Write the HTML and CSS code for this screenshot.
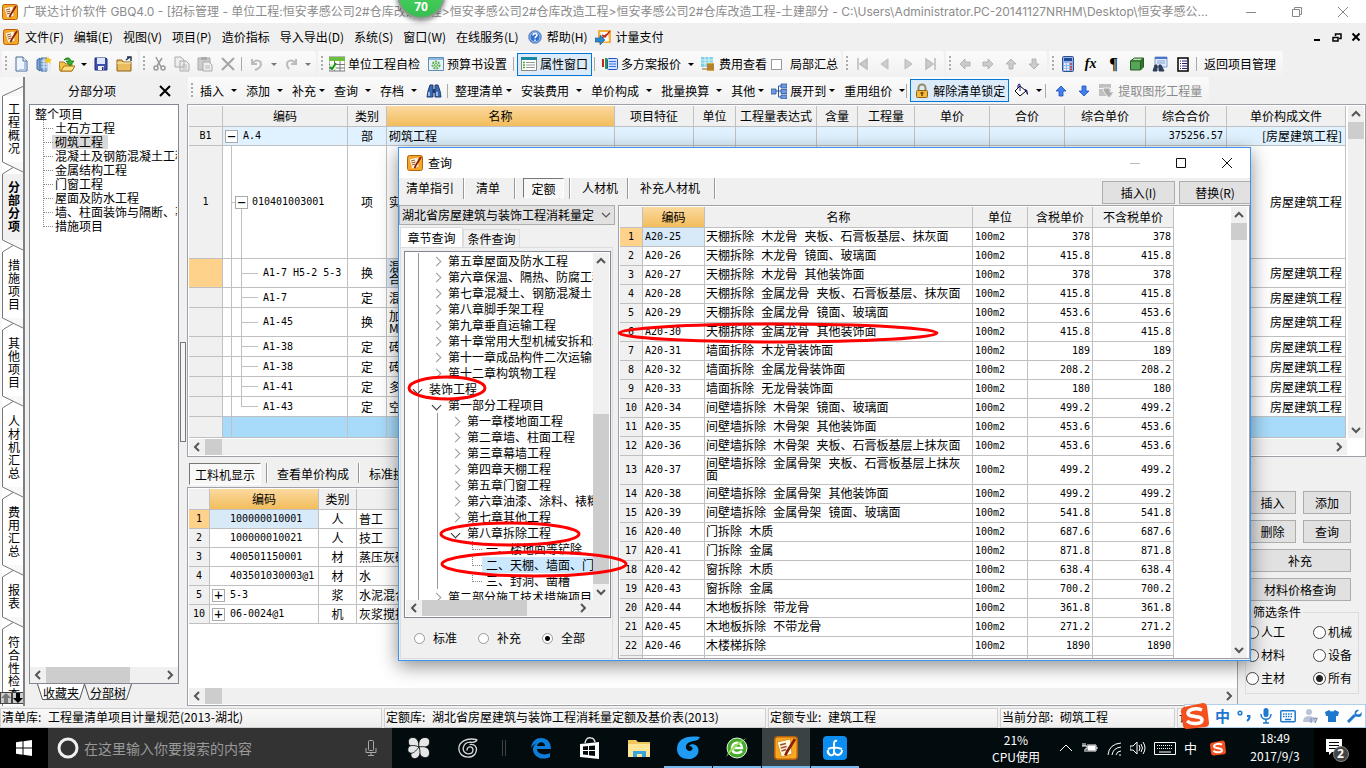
FILE: index.html
```html
<!DOCTYPE html>
<html lang="zh-CN">
<head>
<meta charset="utf-8">
<title>广联达计价软件 GBQ4.0</title>
<link rel="stylesheet" href="styles.css">
</head>
<body>
<svg class="defs" aria-hidden="true">
  <symbol id="app" viewBox="0 0 16 16"><rect x=".5" y=".5" width="15" height="15" rx="2" fill="#f7a823" stroke="#b8600b"/><path d="M2 4l9-2 1 10-7 2z" fill="#fff8e0" stroke="#d98a1a" stroke-width=".6"/><path d="M4 6l4-1M4.500 8l4-1M5 10l3-1" stroke="#a0522d" stroke-width="1"/><path d="M14 2l-5 8-1.500 3" stroke="#8a1f0a" stroke-width="1.800" fill="none"/></symbol>
  <symbol id="up" viewBox="0 0 16 16"><path d="M4 10l4-4 4 4" fill="none" stroke="#555" stroke-width="2"/></symbol>
  <symbol id="down" viewBox="0 0 16 16"><path d="M4 6l4 4 4-4" fill="none" stroke="#555" stroke-width="2"/></symbol>
  <symbol id="left" viewBox="0 0 16 16"><path d="M10 4L6 8l4 4" fill="none" stroke="#555" stroke-width="2"/></symbol>
  <symbol id="right" viewBox="0 0 16 16"><path d="M6 4l4 4-4 4" fill="none" stroke="#555" stroke-width="2"/></symbol>
  <symbol id="arr" viewBox="0 0 16 16"><path d="M8 3l5 5h-3v5H6V8H3z" stroke-width=".8"/></symbol>
  <symbol id="sogou" viewBox="0 0 28 28"><path d="M3 5L22 1q3 0 4 3l2 17q0 3-3 4L6 27q-3 0-4-3L0 9q0-3 3-4z" fill="#f4511e"/><path d="M21 8C14 5 7 8 7 11c0 5 14 2 14 7 0 4-10 5-15 1" fill="none" stroke="#fff" stroke-width="3.500"/></symbol>
  <symbol id="cap" viewBox="0 0 22 12"><path d="M0 0L22 11V12H0z" fill="#fff"/><path d="M.5 0L22 10.500M.5 12L11 5.500" stroke="#777" fill="none"/></symbol>
</svg>

<header class="titlebar">
  <svg class="i16"><use href="#app"/></svg>
  <h1>广联达计价软件 GBQ4.0 - [招标管理 - 单位工程:恒安孝感公司2#仓库改造工程&gt;恒安孝感公司2#仓库改造工程&gt;恒安孝感公司2#仓库改造工程-土建部分 - C:\Users\Administrator.PC-20141127NRHM\Desktop\恒安孝感公...</h1>
  <div class="winbtns">
    <button aria-label="最小化"><svg class="i12"><path d="M1 6.500h10"/></svg></button>
    <button aria-label="还原"><svg class="i12"><path d="M1.500 3.500h7v7h-7zM3.500 3V1.500h7v7H9"/></svg></button>
    <button aria-label="关闭"><svg class="i12"><path d="M1 1l10 10M11 1L1 11"/></svg></button>
  </div>
</header>
<div class="badge">70</div>

<nav class="menubar">
  <svg class="i16"><use href="#app"/></svg>
  <button>文件(F)</button><button>编辑(E)</button><button>视图(V)</button><button>项目(P)</button><button>造价指标</button><button>导入导出(D)</button><button>系统(S)</button><button>窗口(W)</button><button>在线服务(L)</button>
  <button class="icon-menu"><svg class="i16" viewBox="0 0 16 16"><circle cx="8" cy="8" r="6.500" fill="#2f6fd0" stroke="#9ab"/><circle cx="8" cy="8" r="5" fill="none" stroke="#dceaff" stroke-width=".7"/><path d="M6 6.500c0-3 4-2.500 4-.3C10 7.500 8 7.500 8 9.300M8 10.500v1.500" stroke="#fff" stroke-width="1.500" fill="none"/></svg>帮助(H)</button>
  <button class="icon-menu"><svg class="i16" viewBox="0 0 16 16"><rect x="3" y="1" width="13" height="13" fill="#f9b13d"/><path d="M5 3h8l1 9-7 1z" fill="#fff"/><path d="M15 2l-5 6-3-2M7 9l5-4" stroke="#c0301c" stroke-width="1.600" fill="none"/><path d="M0 9h5V6l5 5-5 5v-3H0z" fill="#2a88c8" stroke="#1a5c90" stroke-width=".6"/></svg>计量支付</button>
  <div class="mdi">
    <button aria-label="最小化"><svg class="i10"><path d="M1 8h6"/></svg></button>
    <button aria-label="还原"><svg class="i10"><path d="M1 5.500h5v3.500H1zM3.500 4V2H9v4.500H7" stroke-width="1.500"/></svg></button>
    <button aria-label="关闭"><svg class="i10"><path d="M1.500 1.500l7 7M8.500 1.500l-7 7"/></svg></button>
  </div>
</nav>

<div class="toolbar">
  <div class="group">
    <i class="grip"></i>
    <button class="ib" aria-label="新建"><svg class="i16" viewBox="0 0 16 16"><path d="M3 1h7l4 4v10H3z" fill="#eef5ff" stroke="#4a6a90"/><path d="M10 1v4h4" fill="#fff" stroke="#4a6a90"/><path d="M12 6v8H6" fill="none" stroke="#a8c4e8" stroke-width="2"/></svg></button>
    <button class="ib" aria-label="新建项目"><svg class="i16" viewBox="0 0 16 16"><path d="M1 4l3-2v13l-3-2zM5 2h6v13H5z" fill="#7fa7d8" stroke="#3f689f"/><path d="M5 5h9v10M5 8h9M5 11h9M8 2v13M11 2v13" stroke="#dce9fa"/><path d="M12 0l1 3 3 0-2 2 1 3-3-2-3 2 1-3-2-2h3z" fill="#f5c518"/></svg></button>
    <button class="ib" aria-label="打开"><svg class="i16" viewBox="0 0 16 16"><path d="M0 6h5l2 2h6v7H1z" fill="#f2c24b" stroke="#a8741a"/><path d="M2 15l3-5h11l-3 5z" fill="#ffdf80" stroke="#a8741a"/><path d="M5 4c2-3 6-3 7 1h3l-4 5-4-5h3c0-2-2-2-5-1z" fill="#2db52d" stroke="#0b6b0b" stroke-width=".7"/></svg></button>
    <button class="arrow" aria-label="更多"></button>
    <button class="ib" aria-label="保存"><svg class="i16" viewBox="0 0 16 16"><path d="M2 2h11l1 1v11H2z" fill="#3c50b0" stroke="#1d2b78"/><path d="M4 2h8v6H4z" fill="#dfe5fa"/><path d="M5 10h6v4H5z" fill="#eee"/><path d="M9 11h1.500v3H9z" fill="#1d2b78"/></svg></button>
    <button class="ib" aria-label="文件夹"><svg class="i16" viewBox="0 0 16 16"><path d="M1 4h5l1 2h8v9H1z" fill="#e9bd5f" stroke="#8a6016"/><path d="M1 7h14" stroke="#fff0b8"/><path d="M10 4l4-3m-3 0h4v4" stroke="#234" stroke-width="1.500" fill="none"/></svg></button>
  </div>
  <div class="group off">
    <i class="grip"></i>
    <button class="ib" aria-label="剪切"><svg class="i16" viewBox="0 0 16 16"><path d="M5 1l5 10M11 2L6 10" stroke="#999" fill="none" stroke-width="1.500"/><circle cx="5" cy="12" r="2" fill="none" stroke="#999" stroke-width="1.500"/><circle cx="12" cy="12" r="2" fill="none" stroke="#999" stroke-width="1.500"/></svg></button>
    <button class="ib" aria-label="复制"><svg class="i16" viewBox="0 0 16 16"><path d="M1 1h6l3 3v7H1zM6 5h6l3 3v7H6z" fill="#eee" stroke="#aaa"/><path d="M8 9h5M8 11h5M8 13h5" stroke="#bbb"/></svg></button>
    <button class="ib" aria-label="粘贴"><svg class="i16" viewBox="0 0 16 16"><path d="M1 2h12v12H1z" fill="#ccc" stroke="#aaa"/><path d="M4 1h6v3H4z" fill="#aaa"/><path d="M6 6h6l3 3v6H6z" fill="#eee" stroke="#aaa"/><path d="M8 10h5M8 12h5" stroke="#bbb"/></svg></button>
    <button class="ib" aria-label="删除"><svg class="i16" viewBox="0 0 16 16"><path d="M2 2l12 12M14 2L2 14" stroke="#a5a5a5" stroke-width="2"/></svg></button>
    <i class="sep"></i>
    <button class="ib" aria-label="撤销"><svg class="i16" viewBox="0 0 16 16"><path d="M3 3v5h5M3 8c3-5 9-4 9 0 0 3-3 5-6 6" stroke="#bbb" stroke-width="2" fill="none"/></svg></button>
    <button class="arrow dim" aria-label="更多"></button>
    <button class="ib" aria-label="重做"><svg class="i16" viewBox="0 0 16 16"><path d="M13 3v5H8M13 8c-3-5-9-4-9 0 0 3 1 4 2 5" stroke="#bbb" stroke-width="2" fill="none"/></svg></button>
    <button class="arrow dim" aria-label="更多"></button>
  </div>
  <div class="group">
    <i class="grip"></i>
    <button class="lb"><svg class="i16" viewBox="0 0 16 16"><path d="M0 1h16v14H0z" fill="#fff" stroke="#777"/><path d="M0 1h16v4H0z" fill="#6cbf3c"/><path d="M0 8.500h16M0 12h16M5.500 5v10M11 5v10" stroke="#777"/><path d="M1 8h6v6H1z" fill="#d8f5c8"/><path d="M1 11l2 2 4-6" stroke="#208a20" stroke-width="1.800" fill="none"/></svg>单位工程自检</button>
    <button class="lb"><svg class="i16" viewBox="0 0 16 16"><path d="M.5 1.500h15v13H.5z" fill="#e9f3fa" stroke="#5c8db5"/><path d="M1 2h14v2H1z" fill="#8db7dc"/><circle cx="8" cy="9" r="3.500" fill="none" stroke="#5fae4e" stroke-width="2" stroke-dasharray="2 1"/><circle cx="8" cy="9" r="1.500" fill="none" stroke="#5fae4e"/></svg>预算书设置</button>
    <i class="sep"></i>
    <button class="lb on"><svg class="i16" viewBox="0 0 16 16"><path d="M.5 1.500h15v13H.5z" fill="#fff" stroke="#8a8a7a"/><path d="M0 1h16v3H0z" fill="#1787a5"/><path d="M2 6.500h2M2 9h2M2 11.500h2" stroke="#46a832" stroke-width="1.500"/><path d="M5 6.500h9M5 9h9M5 11.500h9" stroke="#999"/></svg>属性窗口</button>
    <i class="sep"></i>
    <button class="lb"><svg class="i16" viewBox="0 0 16 16"><path d="M1 3v8" stroke="#d02020" stroke-width="2"/><path d="M4 2v11" stroke="#1aa03a" stroke-width="2"/><rect x="5.500" y="2.500" width="10" height="11" rx="1" fill="#cfe3ff" stroke="#2a55c0"/><path d="M7 5.500h7M7 8h7M7 10.500h7" stroke="#3d6fe0" stroke-width="1.200"/></svg>多方案报价</button>
    <button class="arrow" aria-label="更多"></button>
    <button class="lb"><svg class="i16" viewBox="0 0 16 16"><path d="M1 1h12v10H1z" fill="#7fd0e8"/><path d="M1 4h12M1 7h12M5 1v10M9 1v10" stroke="#d8f4fa"/><path d="M7 7h7v8H7z" fill="#d9a441"/><path d="M7 9h7M7 11h7M7 13h7M2 13h5" stroke="#936319"/></svg>费用查看</button>
    <label class="check"><input type="checkbox">局部汇总</label>
  </div>
  <div class="group nav">
    <i class="grip"></i>
    <button class="ib" aria-label="首条"><svg class="i16" viewBox="0 0 16 16"><path d="M4 2v12M13 3L6 8l7 5z" fill="#ccc" stroke="#bbb" stroke-width="1.500"/></svg></button>
    <button class="ib" aria-label="上一条"><svg class="i16" viewBox="0 0 16 16"><path d="M11 3L4 8l7 5z" fill="#ccc" stroke="#bbb"/></svg></button>
    <button class="ib" aria-label="下一条"><svg class="i16" viewBox="0 0 16 16"><path d="M5 3l7 5-7 5z" fill="#ccc" stroke="#bbb"/></svg></button>
    <button class="ib" aria-label="末条"><svg class="i16" viewBox="0 0 16 16"><path d="M12 2v12M3 3l7 5-7 5z" fill="#ccc" stroke="#bbb" stroke-width="1.500"/></svg></button>
  </div>
  <div class="group nav">
    <i class="grip"></i>
    <button class="ib" aria-label="左移"><svg class="i16 grey r270"><use href="#arr"/></svg></button>
    <button class="ib" aria-label="右移"><svg class="i16 grey r90"><use href="#arr"/></svg></button>
    <button class="ib" aria-label="上移"><svg class="i16 grey"><use href="#arr"/></svg></button>
    <button class="ib" aria-label="下移"><svg class="i16 grey r180"><use href="#arr"/></svg></button>
  </div>
  <div class="group">
    <i class="grip"></i>
    <button class="ib" aria-label="计算器"><svg class="i16" viewBox="0 0 16 16"><rect x="2.500" y=".5" width="11" height="15" rx="1" fill="#8fb4e8" stroke="#31518c"/><path d="M4 2h8v3H4z" fill="#234a94"/><path d="M4 8h2M7 8h2M4 11h2M7 11h2M4 13.500h2M7 13.500h2" stroke="#fff" stroke-width="1.500"/><path d="M10 8h2M10 11h2M10 13.500h2" stroke="#d03030" stroke-width="1.500"/></svg></button>
    <button class="ib fx" aria-label="函数">fx</button>
    <button class="ib para" aria-label="符号">¶</button>
    <button class="ib" aria-label="图元"><svg class="i16" viewBox="0 0 16 16"><path d="M1.500 5l4-3h9l-3 3z" fill="#b5e0ae" stroke="#235c23"/><path d="M1.500 5h10v9h-10z" fill="#57a557" stroke="#235c23"/><path d="M11.500 5l3-3v9l-3 3z" fill="#2f7a2f" stroke="#235c23"/></svg></button>
    <button class="ib" aria-label="查找"><svg class="i16" viewBox="0 0 16 16"><path d="M3 1h12v10H3z" fill="#dfe9fa" stroke="#7f9cd0"/><path d="M3 1h12v2H3z" fill="#4a74cc"/><path d="M5 5h8M5 7h8" stroke="#8aa4d4"/><path d="M1 15l2-6h2v6zM7 15V9h2l3 6zM5 11h2" fill="#2d3f58" stroke="#2d3f58"/></svg></button>
    <button class="ib" aria-label="列表"><svg class="i16" viewBox="0 0 16 16"><path d="M3 2h10v13H3z" fill="#fff" stroke="#000" stroke-width="1.500"/><path d="M5 5h1M5 7.500h1M5 10h1M5 12.500h1M7 5h5M7 7.500h5M7 10h5M7 12.500h5" stroke="#1b1b80" stroke-width="1.200"/></svg></button>
    <i class="sep"></i>
    <button class="lb">返回项目管理</button>
  </div>
</div>

<main class="work">
  <nav class="sidetabs">
    <svg class="cap"><path d="M.5 12L22 2" stroke="#777"/></svg><button>工程概况</button>
    <svg class="cap"><use href="#cap"/></svg><button class="sel">分部分项</button>
    <svg class="cap"><use href="#cap"/></svg><button>措施项目</button>
    <svg class="cap"><use href="#cap"/></svg><button>其他项目</button>
    <svg class="cap"><use href="#cap"/></svg><button>人材机汇总</button>
    <svg class="cap"><use href="#cap"/></svg><button>费用汇总</button>
    <svg class="cap"><use href="#cap"/></svg><button>报表</button>
    <svg class="cap"><use href="#cap"/></svg><button>符合性检查</button>
    <div class="spin"><button class="up" aria-label="上"><svg class="i10" viewBox="3 3 10 10"><use href="#arr" width="16" height="16"/></svg></button><button aria-label="下"><svg class="i10 r180" viewBox="3 3 10 10"><use href="#arr" width="16" height="16"/></svg></button></div>
  </nav>

  <section class="leftpane">
    <div class="panehead"><h2>分部分项</h2><button aria-label="关闭"><svg class="i12"><path d="M1 1l10 10M11 1L1 11" stroke="#000" stroke-width="2"/></svg></button></div>
    <div class="treebox">
      <ul class="tree1">
        <li class="root">整个项目</li>
        <li>土石方工程</li><li class="cur"><span>砌筑工程</span></li><li>混凝土及钢筋混凝土工程</li><li>金属结构工程</li><li>门窗工程</li><li>屋面及防水工程</li><li>墙、柱面装饰与隔断、幕墙</li><li>措施项目</li>
      </ul>
      <div class="hs"><button aria-label="左"><svg class="i16"><use href="#left"/></svg></button><i class="thumb t84"></i><button class="end" aria-label="右"><svg class="i16"><use href="#right"/></svg></button></div>
    </div>
    <div class="foottabs">
      <button><svg viewBox="0 0 48 17" aria-hidden="true"><path d="M.5 0l5 15.500h37L47.500 0" fill="#fff" stroke="#555"/></svg><span>收藏夹</span></button>
      <button><svg viewBox="0 0 48 17" aria-hidden="true"><path d="M.5 0l5 15.500h37L47.500 0" fill="#f0f0f0" stroke="#555"/></svg><span>分部树</span></button>
    </div>
  </section>

  <div class="splitter"><i></i></div>

  <section class="center">
    <div class="toolbar two">
      <div class="group dds">
        <i class="grip"></i>
        <button class="dd">插入</button><button class="dd">添加</button><button class="dd tight">补充</button><button class="dd">查询</button><button class="dd">存档</button>
        <button class="plain" aria-label="查找"><svg class="i16" viewBox="0 0 16 16"><path d="M1 14l1-6 2-6h3v12zM9 14V2h3l2 6 1 6z" fill="#3c6ab0" stroke="#1e3c70"/><path d="M7 6h2v4H7z" fill="#1e3c70"/><path d="M3 9v4M11 9v4" stroke="#b8d4f8" stroke-width="1.500"/></svg></button>
        <i class="sep"></i>
        <button class="dd tight">整理清单</button><button class="dd">安装费用</button><button class="dd">单价构成</button><button class="dd">批量换算</button><button class="dd tight short">其他</button>
        <button class="dd tight"><svg class="i16" viewBox="0 0 16 16"><path d="M0 6h5v5H0zM10 1h6v4h-6zM10 6.500h6v4h-6zM10 12h6v4h-6z" fill="#6d9be0" stroke="#2c55a0" stroke-width=".8"/><path d="M5 8h5M7.500 3H10M7.500 3v11H10" stroke="#2c55a0" fill="none"/></svg>展开到</button>
        <button class="dd final">重用组价</button>
        <i class="sep slim"></i>
        <button class="lb on">
          <svg class="i16" viewBox="0 0 16 16"><path d="M4.500 8V5a3.500 3.500 0 017 0v3" fill="none" stroke="#9a8a60" stroke-width="2"/><rect x="2.500" y="7.500" width="11" height="7" rx="1" fill="#f3b93e" stroke="#8f6512"/><path d="M8 9v4M6.500 10h3" stroke="#6b4708" stroke-width="1.500"/></svg>解除清单锁定</button>
        <button class="plain bucket" aria-label="填充"><svg class="i16" viewBox="0 0 16 16"><path d="M7 3l6 5-6 5-5-5z" fill="#fff" stroke="#000"/><path d="M7 8V2q0-2-2 0v3" fill="none" stroke="#14147a"/><path d="M11 6q4-1 4 6-2-1-2-4z" fill="#14147a"/></svg></button>
        <button class="arrow" aria-label="更多"></button>
        <i class="sep slim"></i>
        <button class="ib" aria-label="上移"><svg class="i16 blue"><use href="#arr"/></svg></button>
        <button class="ib" aria-label="下移"><svg class="i16 blue r180"><use href="#arr"/></svg></button>
        <button class="lb dis"><svg class="i16" viewBox="0 0 16 16"><path d="M0 1h12v4H0zM0 6h12v7H0z" fill="#c0c0c0"/><path d="M4 5h7v4h4l-5 6-5-6z" fill="#aaa" stroke="#eee"/></svg>提取图形工程量</button>
      </div>
    </div>

    <div class="gridbox">
      <div class="gridrow">
        <table class="grid main">
          <colgroup><col class="w34"><col class="w125"><col class="w39"><col><col class="w79"><col class="w42"><col class="w81"><col class="w41"><col class="w57"><col class="w75"><col class="w75"><col class="w81"><col class="w81"><col class="w119"></colgroup>
          <thead><tr><th></th><th>编码</th><th>类别</th><th class="hot">名称</th><th>项目特征</th><th>单位</th><th>工程量表达式</th><th>含量</th><th>工程量</th><th>单价</th><th>合价</th><th>综合单价</th><th>综合合价</th><th>单价构成文件</th></tr></thead>
          <tbody>
            <tr class="h19 sky"><td class="idx mono">B1</td><td class="mono"><div class="node n0"><i class="pm">−</i>A.4</div></td><td class="c">部</td><td>砌筑工程</td><td></td><td></td><td></td><td></td><td></td><td></td><td></td><td></td><td class="r mono">375256.57</td><td class="r">[房屋建筑工程]</td></tr>
            <tr class="h113"><td class="idx mono">1</td><td class="mono g1"><div class="node n1"><i class="pm">−</i>010401003001</div></td><td class="c">项</td><td>实</td><td></td><td></td><td></td><td></td><td></td><td></td><td></td><td></td><td></td><td class="r">房屋建筑工程</td></tr>
            <tr class="h29"><td class="idx warm"></td><td class="mono g2">A1-7 H5-2 5-3</td><td class="c">换</td><td class="pick">混<br>合</td><td></td><td></td><td></td><td></td><td></td><td></td><td></td><td></td><td></td><td class="r">房屋建筑工程</td></tr>
            <tr class="h20"><td class="idx"></td><td class="mono g2">A1-7</td><td class="c">定</td><td>混</td><td></td><td></td><td></td><td></td><td></td><td></td><td></td><td></td><td></td><td class="r">房屋建筑工程</td></tr>
            <tr class="h29"><td class="idx"></td><td class="mono g2">A1-45</td><td class="c">换</td><td>加<br>M5</td><td></td><td></td><td></td><td></td><td></td><td></td><td></td><td></td><td></td><td class="r">房屋建筑工程</td></tr>
            <tr class="h20"><td class="idx"></td><td class="mono g2">A1-38</td><td class="c">定</td><td>砖</td><td></td><td></td><td></td><td></td><td></td><td></td><td></td><td></td><td></td><td class="r">房屋建筑工程</td></tr>
            <tr class="h20"><td class="idx"></td><td class="mono g2">A1-38</td><td class="c">定</td><td>砖</td><td></td><td></td><td></td><td></td><td></td><td></td><td></td><td></td><td></td><td class="r">房屋建筑工程</td></tr>
            <tr class="h20"><td class="idx"></td><td class="mono g2">A1-41</td><td class="c">定</td><td>多</td><td></td><td></td><td></td><td></td><td></td><td></td><td></td><td></td><td></td><td class="r">房屋建筑工程</td></tr>
            <tr class="h20"><td class="idx"></td><td class="mono g2 last">A1-43</td><td class="c">定</td><td>空</td><td></td><td></td><td></td><td></td><td></td><td></td><td></td><td></td><td></td><td class="r">房屋建筑工程</td></tr>
            <tr class="h21 fill"><td class="idx"></td><td class="g0"></td><td></td><td></td><td></td><td></td><td></td><td></td><td></td><td></td><td></td><td></td><td></td><td></td></tr>
          </tbody>
        </table>
        <div class="vs"><button aria-label="上"><svg class="i16"><use href="#up"/></svg></button><i class="thumb t17"></i><button class="end" aria-label="下"><svg class="i16"><use href="#down"/></svg></button></div>
      </div>
      <div class="hs inset"><button aria-label="左"><svg class="i16"><use href="#left"/></svg></button><i class="thumb t17w"></i><button class="end" aria-label="右"><svg class="i16"><use href="#right"/></svg></button></div>
    </div>

    <div class="lower">
      <div class="detail">
        <div class="flat"><button class="sel">工料机显示</button><i></i><button>查看单价构成</button><i></i><button>标准换算</button></div>
        <div class="gridbox grow">
          <table class="grid">
            <colgroup><col class="w21"><col class="w109"><col class="w38"><col></colgroup>
            <thead><tr><th></th><th class="hot">编码</th><th>类别</th><th>名称</th></tr></thead>
            <tbody>
              <tr class="h19"><td class="idx warm mono">1</td><td class="mono in20 pick">100000010001</td><td class="c">人</td><td>普工</td></tr>
              <tr class="h19"><td class="idx mono">2</td><td class="mono in20">100000010021</td><td class="c">人</td><td>技工</td></tr>
              <tr class="h19"><td class="idx mono">3</td><td class="mono in20">400501150001</td><td class="c">材</td><td>蒸压灰砂砖</td></tr>
              <tr class="h19"><td class="idx mono">4</td><td class="mono in20">403501030003@1</td><td class="c">材</td><td>水</td></tr>
              <tr class="h19"><td class="idx mono">5</td><td class="mono"><div class="node"><i class="pm">+</i>5-3</div></td><td class="c">浆</td><td>水泥混合砂浆</td></tr>
              <tr class="h19"><td class="idx mono">10</td><td class="mono"><div class="node"><i class="pm">+</i>06-0024@1</div></td><td class="c">机</td><td>灰浆搅拌机</td></tr>
            </tbody>
          </table>
          <div class="hs"><button aria-label="左"><svg class="i16"><use href="#left"/></svg></button><i class="thumb t17w"></i><button class="end" aria-label="右"><svg class="i16"><use href="#right"/></svg></button></div>
        </div>
      </div>
      <aside class="actions">
        <div class="btns"><button>插入</button><button>添加</button><button>删除</button><button>查询</button><button class="wide">补充</button><button class="wide">材料价格查询</button></div>
        <fieldset><legend>筛选条件</legend>
          <label><input type="radio" name="f">人工</label><label><input type="radio" name="f">机械</label>
          <label><input type="radio" name="f">材料</label><label><input type="radio" name="f">设备</label>
          <label><input type="radio" name="f">主材</label><label><input type="radio" name="f" checked>所有</label>
        </fieldset>
      </aside>
    </div>
  </section>
</main>

<footer class="status"><div class="s1">清单库: <span>工程量清单项目计量规范(2013-湖北)</span></div><div class="s1">定额库: <span>湖北省房屋建筑与装饰工程消耗量定额及基价表(2013)</span></div><div class="s2">定额专业: <span>建筑工程</span></div><div class="s3">当前分部: <span>砌筑工程</span></div><div class="s4">计</div></footer>

<div class="ime">
  <svg class="logo"><use href="#sogou"/></svg><b>中</b>
  <svg class="i16" viewBox="0 0 16 16"><circle cx="4" cy="5" r="1.800" fill="none" stroke="#1f78d0" stroke-width="1.500"/><path d="M11 8h2.500q.5 3-2.500 5" fill="none" stroke="#1f78d0" stroke-width="2"/></svg>
  <svg class="i16" viewBox="0 0 16 16"><rect x="5.500" y="0" width="5" height="9" rx="2.500" fill="#1f78d0"/><path d="M3 6c0 7 10 7 10 0M8 11v4M5 15h6" fill="none" stroke="#1f78d0" stroke-width="1.500"/></svg>
  <svg class="i16" viewBox="0 0 16 16"><rect x=".8" y="2.800" width="14.400" height="11" rx="1" fill="none" stroke="#1f78d0" stroke-width="1.500"/><path d="M3 6h10M3 8.500h10" stroke="#1f78d0" stroke-width="1.500" stroke-dasharray="1.500 1"/><path d="M5 11.500h6" stroke="#1f78d0" stroke-width="1.500"/></svg>
  <svg class="i16" viewBox="0 0 16 16"><circle cx="7" cy="4" r="3" fill="#b9c3d8"/><path d="M1 14q0-6 6-6t7 6z" fill="#b9c3d8"/><path d="M9 10v5M11 10.500h4l-2 4.500" stroke="#8997b5" stroke-width="1.300" fill="none"/></svg>
  <svg class="i16" viewBox="0 0 16 16"><path d="M1 4l4-2q3 3 6 0l4 2-1 4h-2v6H4V8H2z" fill="#1f78d0"/></svg>
  <svg class="i16" viewBox="0 0 16 16"><path d="M2 14l7-7" stroke="#1f78d0" stroke-width="3"/><path d="M13 2l-3 3 1 1.500L14 6l1.500-2q1 5-3 5-4 0-4-3.500Q9 1 13 2z" fill="#1f78d0"/></svg>
</div>

<div class="taskbar">
  <button class="start" aria-label="开始"><svg class="i16" viewBox="0 0 16 16"><path d="M0 2.200L6.500 1.300v6.200H0zM7.500 1.200L16 0v7.500H7.500zM0 8.500h6.500v6.200L0 13.800zM7.500 8.500H16V16l-8.500-1.200z" fill="#fff"/></svg></button>
  <label class="search"><svg class="i22" viewBox="0 0 22 22"><circle cx="11" cy="11" r="9" fill="none" stroke="#f0f0f0" stroke-width="3"/></svg><input type="text" placeholder="在这里输入你要搜索的内容"><svg class="i16" viewBox="0 0 16 16"><rect x="5.500" y=".5" width="5" height="10" rx="1" fill="none" stroke="#aaa"/><path d="M3 8v4.500h10V8M8 12.500V16M5 15.500h6" fill="none" stroke="#aaa"/></svg></label>
  <div class="apps">
    <button aria-label="应用"><svg class="i24" viewBox="0 0 24 24"><g fill="#e6e6e6" stroke="#02090c" stroke-width=".8"><path d="M12 11C8 12 2 11 1.500 7 1 3 3 1.500 6 1.500c4 0 6 4 6 9.500z"/><path d="M12 11c-1-5 1-9.500 6-9.500 4 0 5 3 4.500 5.500C22 11 17 12 12 11z"/><path d="M12 11c5-1 10 0 10.500 5 .3 4-2 6-5 5.500-4-.5-6-5-5.500-10.500z"/><path d="M12 11c2 5 1 11-3.500 11.500C5 23 3.500 20 4 18c1-4 4-6 8-7z"/><path d="M12 11c-3 4-6 7-9 6-3-1-2.500-5-1-6.500C4 9 8 9 12 11z"/></g></svg></button>
    <button aria-label="应用"><svg class="i20" viewBox="0 0 24 24"><path d="M23 2C9-1 1 5 1 13c0 6 5 10 11 10 7 0 11-5 10-11-1-4-5-5-8-4M23 2q-2 4-8 3C5 5 3 18 12 19q6 0 6-5c-1-5-8-4-7 1" fill="none" stroke="#d8d8d8" stroke-width="1.600"/></svg></button>
    <i class="tsep"></i>
    <button aria-label="Edge"><svg class="i24" viewBox="0 0 24 24"><path d="M2 12C3 5 7 2 12 2c7 0 10 5 10 11H8c0 5 8 7 13 4v4c-8 4-17 0-17-8 0-3 2-5 4-6-3 1-5 3-6 5zm6-2h8c0-5-7-5-8 0z" fill="#0d7fdb"/></svg></button>
    <button aria-label="商店"><svg class="i24" viewBox="0 0 24 24"><path d="M2 8l19-2v17L2 21z" fill="#fff"/><path d="M7 7q1-6 6-5 3 0 4 4" fill="none" stroke="#ddd" stroke-width="1.500"/><path d="M5 10.500l5-.5v4H5zM11 10l6-.5V14h-6zM5 15h5v4l-5-.5zM11 15h6v5l-6-.7z" fill="#02090c"/></svg></button>
    <button aria-label="资源管理器"><svg class="i24" viewBox="0 0 24 24"><path d="M1 4h8l2 2h12v15H1z" fill="#f0c65a"/><path d="M1 8h22v13H1z" fill="#ffe597"/><path d="M6 21v-6h13v6h-4v-3h-5v3z" fill="#39a5de"/></svg></button>
    <button class="run" aria-label="浏览器"><svg class="i24" viewBox="0 0 24 24"><path d="M24 1C9-1 1 4 1 13c0 7 6 10 11 10 8 0 12-6 10-11-1-4-7-5-9-2 4 0 5 4 1 5-4 0-6-5-2-8 5-3 10-1 12-6z" fill="#1d9bf5"/></svg></button>
    <button class="run" aria-label="浏览器"><svg class="i24" viewBox="0 0 24 24"><circle cx="12" cy="12" r="10" fill="#45a82c" stroke="#dff5d5"/><path d="M7 12h10c0-7-10-7-10 0 0 6 7 6 10 3" fill="none" stroke="#fff" stroke-width="2.500"/><path d="M1 21Q5 9 22 2 12 9 1 21z" fill="#9be05c"/></svg></button>
    <button class="run cur" aria-label="广联达"><svg class="i24"><use href="#app"/></svg></button>
    <button class="run" aria-label="应用"><svg class="i24" viewBox="0 0 24 24"><rect width="24" height="24" rx="4" fill="#0b8ef0"/><path d="M14 5q-3-1-3 3v8q0 4-4 3-3-2-2-5M5 13q6-3 14 0M11 16q1 3 4 3 4-1 4-5" fill="none" stroke="#fff" stroke-width="2"/></svg></button>
  </div>
  <div class="cpu">21%<br>CPU使用</div>
  <div class="tray">
    <svg class="i16" viewBox="0 0 16 16"><path d="M2 11l6-6 6 6"/></svg>
    <svg class="i16" viewBox="0 0 16 16"><path d="M5 5h9v6H4M15 7v2M1 3v3M3 3v3M0 6h5v3H3v3"/><path d="M6 6h7v4H6z" fill="#fff"/></svg>
    <svg class="i16" viewBox="0 0 16 16"><path d="M2 15Q3 4 15 3M6 15q1-7 9-8M10 15q1-4 5-4M13 15h2" /></svg>
    <svg class="i16" viewBox="0 0 16 16"><path d="M0 6h3l4-4v12l-4-4H0zM9 5q2 3 0 6M11 4q3 4 0 8M13 2q4 6 0 12"/></svg>
    <svg class="kb" viewBox="0 0 22 13"><path d="M.5.5h21v12H.5zM5 10h12"/><path d="M3 3.500h16M3 6.500h16" stroke-dasharray="1 1"/></svg>
    <span>中</span>
    <svg class="i16"><use href="#sogou"/></svg>
  </div>
  <div class="clock">18:49<br>2017/9/3</div>
  <div class="note"><svg class="i24" viewBox="0 0 24 24"><path d="M1 1h16v13H7l-3 3v-3H1z" fill="#fff"/><path d="M4 4.500h10M4 7.500h10M4 10.500h8" stroke="#000"/><circle cx="16" cy="16" r="7.500" fill="#444" stroke="#888"/></svg><span>2</span></div>
</div>

<section class="dialog">
  <div class="dtitle"><svg class="i16"><use href="#app"/></svg><h2>查询</h2>
    <div class="winbtns"><button aria-label="最小化"><svg class="i12 pale"><path d="M1 6.500h10"/></svg></button><button aria-label="最大化"><svg class="i12"><path d="M1.500 1.500h9v9h-9z"/></svg></button><button aria-label="关闭"><svg class="i12"><path d="M1 1l10 10M11 1L1 11"/></svg></button></div>
  </div>
  <div class="dtabs"><button>清单指引</button><i></i><button class="mid">清单</button><i></i><button class="sel">定额</button><i></i><button>人材机</button><i></i><button class="mid">补充人材机</button><i></i>
    <div class="cmds"><button>插入(I)</button><button>替换(R)</button></div></div>
  <div class="dbody">
    <div class="dleft">
      <div class="combo"><select aria-label="定额库"><option>湖北省房屋建筑与装饰工程消耗量定</option></select><svg class="i16" viewBox="0 0 16 16"><path d="M4 6l4 4 4-4" fill="none" stroke="#555" stroke-width="1.200"/></svg></div>
      <div class="subtabs"><button class="sel">章节查询</button><button>条件查询</button></div>
      <div class="subbody">
        <div class="dtree">
          <div class="trow">
            <ul class="tree2">
              <li class="l1">第五章屋面及防水工程</li><li class="l1">第六章保温、隔热、防腐工程</li><li class="l1">第七章混凝土、钢筋混凝土</li><li class="l1">第八章脚手架工程</li><li class="l1">第九章垂直运输工程</li><li class="l1">第十章常用大型机械安拆和场外</li><li class="l1">第十一章成品构件二次运输</li><li class="l1">第十二章构筑物工程</li>
              <li class="l0 open">装饰工程</li><li class="l1 open">第一部分工程项目</li>
              <li class="l2">第一章楼地面工程</li><li class="l2">第二章墙、柱面工程</li><li class="l2">第三章幕墙工程</li><li class="l2">第四章天棚工程</li><li class="l2">第五章门窗工程</li><li class="l2">第六章油漆、涂料、裱糊工程</li><li class="l2">第七章其他工程</li><li class="l2 open">第八章拆除工程</li>
              <li class="l3">一、楼地面等铲除</li><li class="l3 cur"><span>二、天棚、墙面、门窗</span></li><li class="l3">三、封洞、凿槽</li><li class="l1">第二部分施工技术措施项目</li>
            </ul>
            <div class="vs"><button aria-label="上"><svg class="i16"><use href="#up"/></svg></button><i class="gap"></i><i class="thumb fillv"></i><button aria-label="下"><svg class="i16"><use href="#down"/></svg></button></div>
          </div>
          <div class="hs"><button aria-label="左"><svg class="i16"><use href="#left"/></svg></button><i class="thumb t105"></i><button class="near" aria-label="右"><svg class="i16"><use href="#right"/></svg></button></div>
        </div>
        <div class="radios"><label><input type="radio" name="s">标准</label><label><input type="radio" name="s">补充</label><label><input type="radio" name="s" checked>全部</label></div>
      </div>
    </div>
    <div class="dright">
      <table class="grid quota">
        <colgroup><col class="w23"><col class="w62"><col class="w268"><col class="w55"><col class="w65"><col class="w81"></colgroup>
        <thead><tr><th></th><th class="hot">编码</th><th>名称</th><th>单位</th><th>含税单价</th><th>不含税单价</th></tr></thead>
        <tbody>
          <tr><td class="idx warm">1</td><td class="pick">A20-25</td><td>天棚拆除 木龙骨 夹板、石膏板基层、抹灰面</td><td>100m2</td><td>378</td><td>378</td></tr>
          <tr><td class="idx">2</td><td>A20-26</td><td>天棚拆除 木龙骨 镜面、玻璃面</td><td>100m2</td><td>415.8</td><td>415.8</td></tr>
          <tr><td class="idx">3</td><td>A20-27</td><td>天棚拆除 木龙骨 其他装饰面</td><td>100m2</td><td>378</td><td>378</td></tr>
          <tr><td class="idx">4</td><td>A20-28</td><td>天棚拆除 金属龙骨 夹板、石膏板基层、抹灰面</td><td>100m2</td><td>415.8</td><td>415.8</td></tr>
          <tr><td class="idx">5</td><td>A20-29</td><td>天棚拆除 金属龙骨 镜面、玻璃面</td><td>100m2</td><td>453.6</td><td>453.6</td></tr>
          <tr><td class="idx">6</td><td>A20-30</td><td>天棚拆除 金属龙骨 其他装饰面</td><td>100m2</td><td>415.8</td><td>415.8</td></tr>
          <tr><td class="idx">7</td><td>A20-31</td><td>墙面拆除 木龙骨装饰面</td><td>100m2</td><td>189</td><td>189</td></tr>
          <tr><td class="idx">8</td><td>A20-32</td><td>墙面拆除 金属龙骨装饰面</td><td>100m2</td><td>208.2</td><td>208.2</td></tr>
          <tr><td class="idx">9</td><td>A20-33</td><td>墙面拆除 无龙骨装饰面</td><td>100m2</td><td>180</td><td>180</td></tr>
          <tr><td class="idx">10</td><td>A20-34</td><td>间壁墙拆除 木骨架 镜面、玻璃面</td><td>100m2</td><td>499.2</td><td>499.2</td></tr>
          <tr><td class="idx">11</td><td>A20-35</td><td>间壁墙拆除 木骨架 其他装饰面</td><td>100m2</td><td>453.6</td><td>453.6</td></tr>
          <tr><td class="idx">12</td><td>A20-36</td><td>间壁墙拆除 木骨架 夹板、石膏板基层上抹灰面</td><td>100m2</td><td>453.6</td><td>453.6</td></tr>
          <tr class="h29"><td class="idx">13</td><td>A20-37</td><td>间壁墙拆除 金属骨架 夹板、石膏板基层上抹灰<br>面</td><td>100m2</td><td>499.2</td><td>499.2</td></tr>
          <tr><td class="idx">14</td><td>A20-38</td><td>间壁墙拆除 金属骨架 其他装饰面</td><td>100m2</td><td>499.2</td><td>499.2</td></tr>
          <tr><td class="idx">15</td><td>A20-39</td><td>间壁墙拆除 金属骨架 镜面、玻璃面</td><td>100m2</td><td>541.8</td><td>541.8</td></tr>
          <tr><td class="idx">16</td><td>A20-40</td><td>门拆除 木质</td><td>100m2</td><td>687.6</td><td>687.6</td></tr>
          <tr><td class="idx">17</td><td>A20-41</td><td>门拆除 金属</td><td>100m2</td><td>871.8</td><td>871.8</td></tr>
          <tr><td class="idx">18</td><td>A20-42</td><td>窗拆除 木质</td><td>100m2</td><td>638.4</td><td>638.4</td></tr>
          <tr><td class="idx">19</td><td>A20-43</td><td>窗拆除 金属</td><td>100m2</td><td>700.2</td><td>700.2</td></tr>
          <tr><td class="idx">20</td><td>A20-44</td><td>木地板拆除 带龙骨</td><td>100m2</td><td>361.8</td><td>361.8</td></tr>
          <tr><td class="idx">21</td><td>A20-45</td><td>木地板拆除 不带龙骨</td><td>100m2</td><td>271.2</td><td>271.2</td></tr>
          <tr><td class="idx">22</td><td>A20-46</td><td>木楼梯拆除</td><td>100m2</td><td>1890</td><td>1890</td></tr>
          <tr><td class="idx"></td><td></td><td></td><td></td><td></td><td></td></tr>
        </tbody>
      </table>
      <div class="vs"><button aria-label="上"><svg class="i16"><use href="#up"/></svg></button><i class="thumb t17"></i><button class="end" aria-label="下"><svg class="i16"><use href="#down"/></svg></button></div>
    </div>
  </div>
  <svg class="marks" viewBox="0 0 853 514" aria-hidden="true"><g fill="none" stroke="#f00" stroke-width="3"><ellipse cx="379" cy="185" rx="159" ry="9"/><ellipse cx="48" cy="240" rx="38" ry="11"/><ellipse cx="111" cy="386" rx="69" ry="11"/><ellipse cx="135" cy="416" rx="92" ry="12"/></g></svg>
</section>
</body>
</html>
```
FILE: styles.css
```css
* { box-sizing: border-box; }
html, body { height: 100%; }
body { margin: 0; display: flex; flex-direction: column; position: relative; overflow: hidden; background: #f0f0f0; color: #000; font: 12px/16px "Noto Sans CJK SC", sans-serif; }
button { border: 0; padding: 0; margin: 0; background: none; font: inherit; color: inherit; white-space: nowrap; }
svg { display: block; flex: none; fill: none; }
h1, h2 { margin: 0; font: inherit; }
ul { list-style: none; margin: 0; padding: 0; }
.defs { position: absolute; width: 0; height: 0; }
.i10 { width: 10px; height: 10px; }
.i12 { width: 12px; height: 12px; }
.i16 { width: 16px; height: 16px; }
.i20 { width: 20px; height: 20px; }
.i22 { width: 22px; height: 22px; }
.i24 { width: 24px; height: 24px; }
.r90 { transform: rotate(90deg); }
.r180 { transform: rotate(180deg); }
.r270 { transform: rotate(270deg); }
.grey { fill: #ccc; stroke: #aaa; }
.blue { fill: #3f7ff0; stroke: #1f4fb8; }
.mono { font-family: "DejaVu Sans Mono", monospace; font-size: 10px; }

.titlebar { flex: none; height: 23px; display: flex; align-items: center; padding-left: 2px; gap: 5px; background: #fff; color: #8c8c8c; }
.titlebar h1 { flex: 1; min-width: 0; font-family: "Inter", "Noto Sans CJK SC", sans-serif; white-space: nowrap; overflow: hidden; }
.winbtns { display: flex; align-self: stretch; margin-left: auto; }
.winbtns button { width: 46px; display: flex; align-items: center; justify-content: center; }
.winbtns svg { stroke: #111; }
.winbtns .pale { stroke: #bbb; }
.titlebar .winbtns { margin-left: 0; }
.titlebar .winbtns svg { stroke: #888; }
.badge { position: absolute; left: 397px; top: -29px; width: 48px; height: 48px; border-radius: 50%; background: linear-gradient(#58dc68, #35bf50); border: 2px solid #8a9a8c; box-shadow: 0 2px 5px rgba(0,0,0,.5); color: #fff; font: bold 12px/16px "Open Sans", sans-serif; display: flex; align-items: flex-end; justify-content: center; padding-bottom: 2px; }

.menubar { flex: none; height: 28px; display: flex; align-items: center; padding-left: 3px; gap: 10px; }
.menubar > svg { margin-right: -4px; }
.icon-menu { display: flex; align-items: center; gap: 4px; margin-left: -2px; }
.mdi { margin-left: auto; display: flex; gap: 9px; padding-right: 5px; }
.mdi svg { stroke: #000; stroke-width: 2; }

.toolbar { flex: none; height: 26px; display: flex; gap: 2px; padding-left: 2px; }
.group { display: flex; align-items: center; padding: 0 3px; background: linear-gradient(#fbfbfb, #f1f1f1); border-radius: 0 3px 3px 0; }
.grip { flex: none; width: 2px; height: 16px; margin-right: 2px; background: repeating-linear-gradient(#aaa 0 2px, transparent 2px 4px); }
.sep { flex: none; width: 1px; height: 14px; margin: 0 3px 0 2px; background: #aaa; }
.ib { width: 23px; height: 22px; display: flex; align-items: center; justify-content: center; }
.fx { font: italic bold 14px/20px "Liberation Serif", serif; }
.para { font: bold 16px/20px "Liberation Serif", serif; }
.lb { height: 23px; display: flex; align-items: center; gap: 3px; padding: 0 4px; }
.on { background: #dcebf9; box-shadow: inset 0 0 0 1px #0078d7; }
.arrow { width: 11px; height: 20px; display: flex; align-items: center; justify-content: center; }
.arrow::after, .dd::after { content: ""; border: 3px solid transparent; border-top-color: #000; border-bottom: 0; }
.dim::after { border-top-color: #777; }
.check { display: flex; align-items: center; gap: 8px; }
.check input { appearance: none; width: 11px; height: 11px; margin: 0; border: 1px solid #999; background: #fff; }
.nav { padding-right: 2px; }
.two { padding-left: 1px; height: 27px; }
.dds .grip { margin-right: 7px; }
.dd { display: flex; align-items: center; margin-right: 9px; }
.dd::after { margin-left: 7px; }
.dd.tight::after { margin-left: 3px; }
.dd.short { margin-right: 7px; }
.dd.final { margin-right: 0; }
.dd svg { margin-right: 3px; }
.dds .plain { margin-right: 2px; }
.dds .sep { margin: 0 7px 0 3px; }
.dds .slim { margin: 0 3px 0 1px; }
.dds .bucket { margin: 0 4px; }
.dis { color: #8a8a8a; }

.work { flex: 1; min-height: 0; display: flex; }
.sidetabs { width: 25px; flex: none; padding: 7px 1px 0 2px; overflow: hidden; border-right: 2px solid #808080; background: #f8f8f8; position: relative; display: flex; flex-direction: column; }
.sidetabs .cap { width: 22px; height: 12px; }
.sidetabs > button { flex: none; width: 22px; padding: 6px 4px 8px 5px; line-height: 13px; white-space: normal; word-break: break-all; background: #fff; border-left: 1px solid #777; }
.sidetabs .sel { background: #f0f0f0; font-weight: bold; }
.spin { position: absolute; left: 0; bottom: 2px; display: flex; }
.spin button { width: 12px; height: 12px; border: 1px solid #444; background: #ccc; display: flex; }
.spin svg { fill: #000; }
.spin .up svg { fill: #777; }

.leftpane { width: 150px; flex: none; margin-left: 4px; display: flex; flex-direction: column; }
.panehead { height: 27px; display: flex; align-items: center; padding: 0 8px 0 39px; justify-content: space-between; }
.treebox { flex: 1; border: 1px solid #828790; background: #fff; display: flex; flex-direction: column; overflow: hidden; }
.tree1 { flex: 1; padding: 2px 0 0 5px; margin-right: 1px; overflow: hidden; }
.tree1 li { height: 14px; line-height: 14px; padding-left: 12px; margin-left: 8px; white-space: nowrap; position: relative; }
.tree1 li::before { content: ""; position: absolute; left: 0; top: -7px; width: 9px; height: 14px; border-left: 1px dotted #888; border-bottom: 1px dotted #888; }
.tree1 .root { padding-left: 0; margin-left: 0; }
.tree1 .root::before { display: none; }
.tree1 .cur span { background: #d9d9d9; padding: 0 5px 0 3px; margin-left: -3px; display: inline-block; height: 14px; }
.foottabs { height: 22px; padding: 0 0 0 8px; display: flex; }
.foottabs button { position: relative; width: 48px; height: 17px; margin-right: -1px; }
.foottabs svg { position: absolute; inset: 0; width: 48px; height: 17px; }
.foottabs span { position: relative; }
.splitter { width: 8px; flex: none; display: flex; align-items: center; justify-content: center; }
.splitter i { width: 6px; height: 100px; border: 1px solid #777; background: #f4f4f4; }

.hs, .vs { display: flex; flex: none; background: #f0f0f0; }
.hs { height: 16px; }
.vs { width: 16px; flex-direction: column; }
.thumb { flex: none; background: #cdcdcd; }
.t84 { width: 84px; }
.t105 { width: 105px; }
.t17w { width: 17px; }
.t17 { height: 17px; }
.hs .end { margin-left: auto; }
.vs .end { margin-top: auto; }

.center { flex: 1; min-width: 0; display: flex; flex-direction: column; }
.gridbox { border: 1px solid #a0a0a8; background: #fff; padding: 1px 0 1px 1px; display: flex; flex-direction: column; }
.gridrow { display: flex; gap: 2px; padding-right: 1px; }
.gridrow .grid { flex: 1; width: 0; }
.inset { margin: 1px 18px 0 0; }
.grid { table-layout: fixed; border-collapse: separate; border-spacing: 0; width: 100%; line-height: 12px; }
.grid th { height: 21px; font-weight: normal; background: #f0f0f0; padding: 0; }
.grid th, .grid td { border-right: 1px solid #c0c0c0; border-bottom: 1px solid #c0c0c0; overflow: hidden; white-space: nowrap; }
.grid td { padding: 0 2px; }
.grid .hot { background: linear-gradient(#fbd9a0, #f2bd5c); }
.grid .idx { background: #f0f0f0; text-align: center; padding: 0; }
.grid .warm { background: #ffd28c; }
.grid .pick { background: #d8e9f8; }
.grid .c { text-align: center; }
.grid .r { text-align: right; padding-right: 3px; }
.h19 { height: 19px; } .h20 { height: 20px; } .h21 { height: 21px; } .h29 { height: 29px; } .h113 { height: 113px; }
.sky td { background: #e0f2ff; }
.fill td { background: #a8daf9; }
.node { display: flex; align-items: center; gap: 5px; }
.n1 { padding-left: 10px; gap: 4px; }
.pm { flex: none; width: 13px; height: 13px; border: 1px solid #aaa; background: #fff; font: 14px/11px "DejaVu Sans Mono", monospace; text-align: center; }
.main .g0 { background: linear-gradient(#c0c0c0, #c0c0c0) 8px 0 / 1px 100% no-repeat #a8daf9; }
.main .g1 { background: linear-gradient(#c0c0c0, #c0c0c0) 8px 0 / 1px 100% no-repeat, linear-gradient(#c0c0c0, #c0c0c0) 18px 100% / 1px 50% no-repeat, linear-gradient(#c0c0c0, #c0c0c0) 8px 50% / 6px 1px no-repeat; }
.main .g2 { padding-left: 40px; background: linear-gradient(#c0c0c0, #c0c0c0) 8px 0 / 1px 100% no-repeat, linear-gradient(#c0c0c0, #c0c0c0) 18px 0 / 1px 100% no-repeat, linear-gradient(#c0c0c0, #c0c0c0) 18px 50% / 17px 1px no-repeat; }
.main .last { background-size: 1px 100%, 1px 50%, 17px 1px; }
.grid .in20 { padding-left: 20px; }
.w21 { width: 21px; } .w23 { width: 23px; } .w34 { width: 34px; } .w38 { width: 38px; } .w39 { width: 39px; } .w41 { width: 41px; } .w42 { width: 42px; } .w55 { width: 55px; } .w57 { width: 57px; } .w62 { width: 62px; } .w65 { width: 65px; } .w75 { width: 75px; } .w79 { width: 79px; } .w81 { width: 81px; } .w109 { width: 109px; } .w119 { width: 119px; } .w125 { width: 125px; } .w268 { width: 268px; }

.lower { flex: 1; min-height: 0; display: flex; }
.detail { flex: 1; display: flex; flex-direction: column; padding-top: 6px; }
.flat { height: 24px; display: flex; align-items: flex-start; padding-left: 2px; }
.flat button { height: 22px; padding: 0 9px; }
.flat i { width: 2px; height: 20px; border-left: 1px solid #999; border-right: 1px solid #fff; }
.flat .sel { border: 1px solid; border-color: #777 #fff #fff #777; background: #f8f8f8; padding: 2px 5px 0; margin-right: 5px; }
.grow { flex: 1; }
.grow .hs { margin-top: auto; }
.actions { width: 128px; flex: none; padding: 34px 7px 0; }
.btns { display: grid; grid-template-columns: 1fr 48px; gap: 6px 7px; padding: 0 8px 0 4px; }
.btns button, .cmds button { height: 23px; border: 1px solid #adadad; background: #e1e1e1; }
.btns .wide { grid-column: 1 / 3; }
fieldset { margin: 3px 0 0; border: 1px solid #dcdcdc; padding: 4px 0 7px; display: grid; grid-template-columns: 67px 1fr; row-gap: 7px; min-width: 0; }
legend { padding: 0 2px; margin-left: 5px; }
label { display: flex; align-items: center; gap: 2px; white-space: nowrap; }
input[type=radio] { appearance: none; flex: none; width: 13px; height: 13px; margin: 0; border: 1px solid #444; border-radius: 50%; background: #fff; }
input[type=radio]:checked { background: radial-gradient(circle, #222 0 3px, #fff 4px); }

.status { flex: none; height: 22px; display: flex; gap: 2px; padding-top: 2px; }
.status div { border: 1px solid #d0d0d0; background: linear-gradient(#fafafa, #eee); padding: 0 1px; white-space: nowrap; overflow: hidden; }
.status span { margin-left: 4px; }
.s1 { width: 382px; } .s2 { width: 230px; } .s3 { width: 175px; } .s4 { flex: 1; }
.ime { position: absolute; right: 0; bottom: 40px; width: 182px; height: 24px; background: #fff; border: 1px solid #b0d0ec; display: flex; align-items: center; justify-content: space-between; padding-right: 3px; color: #1f78d0; font-size: 15px; }
.ime .logo { width: 28px; height: 28px; margin-left: -4px; }

.taskbar { flex: none; height: 40px; display: flex; background: #020b0e; color: #fff; }
.start { width: 48px; display: flex; align-items: center; justify-content: center; background: #000; }
.search { width: 344px; background: #333; padding: 0 13px 0 9px; gap: 5px; }
.search input { flex: 1; min-width: 0; border: 0; padding: 0; background: none; font: 14px/20px "Noto Sans CJK SC", sans-serif; color: #999; }
.search input::placeholder { color: #999; }
.apps { display: flex; flex: 1; align-items: stretch; padding-left: 3px; }
.apps button { width: 48px; margin-right: 1px; display: flex; align-items: center; justify-content: center; }
.tsep { width: 4px; height: 16px; margin: 12px 11px 0 9px; border: solid #444; border-width: 0 1px; }
.run { box-shadow: inset 0 -2px #76b9ed; }
.cur.run { background: #3a4244; }
.cpu { width: 60px; text-align: center; line-height: 17px; padding-top: 3px; }
.tray { display: flex; align-items: center; gap: 8px; margin-left: 12px; font-size: 13px; }
.tray svg { stroke: #fff; }
.tray svg:last-child { stroke: none; margin-left: 5px; }
.kb { width: 22px; height: 13px; }
.clock { width: 84px; text-align: center; line-height: 18px; padding: 1px 0 0 6px; margin-left: 4px; }
.note { width: 52px; position: relative; padding: 10px 0 0 11px; background: #000; }
.note span { position: absolute; left: 23px; top: 18px; font: bold 12px/16px "Open Sans", sans-serif; }

.dialog { position: absolute; left: 398px; top: 147px; width: 853px; height: 514px; border: 1px solid #3a96f0; background: #f0f0f0; box-shadow: 0 5px 18px rgba(0,0,0,.45); display: flex; flex-direction: column; }
.dtitle { height: 30px; flex: none; background: #fff; display: flex; align-items: center; padding-left: 8px; gap: 5px; }
.dtabs { height: 27px; flex: none; display: flex; align-items: flex-start; }
.dtabs > button { height: 20px; padding: 0 9px 0 7px; }
.dtabs > i { width: 2px; height: 21px; border-left: 1px solid #999; border-right: 1px solid #fff; margin-right: 4px; }
.dtabs > .mid { padding: 0 14px 0 7px; }
.dtabs > .sel { border: 1px solid; border-color: #777 #fff #fff #777; background: #f8f8f8; width: 41px; padding: 1px 0 0; margin: 0 5px 0 3px; }
.cmds { margin-left: auto; display: flex; gap: 4px; padding-top: 3px; }
.cmds button { width: 73px; }
.cmds button:last-child { width: 71px; border-right: 0; }
.dbody { flex: 1; min-height: 0; display: flex; gap: 3px; }
.dleft { width: 216px; display: flex; flex-direction: column; }
.combo { position: relative; flex: none; }
.combo select { display: block; width: 100%; height: 20px; appearance: none; border: 1px solid #adadad; border-radius: 0; background: #e1e1e1; color: #000; font: inherit; padding: 0 16px 0 2px; }
.combo svg { position: absolute; right: 1px; top: 2px; }
.subtabs { height: 22px; flex: none; display: flex; align-items: flex-end; padding: 3px 0 0 1px; }
.subtabs button { height: 18px; border: 1px solid #dcdcdc; border-bottom: 0; padding: 0 3px; width: 57px; }
.subtabs .sel { height: 20px; background: #fff; width: 63px; }
.subbody { flex: 1; min-height: 0; margin: 0 2px 1px 1px; border: 1px solid #dcdcdc; padding: 3px 1px 0 3px; display: flex; flex-direction: column; }
.dtree { border: 1px solid #828790; background: #fff; flex: 1; min-height: 0; display: flex; flex-direction: column; padding: 1px; }
.trow { flex: 1; min-height: 0; display: flex; }
.tree2 { flex: 1; overflow: hidden; padding-left: 12px; background: linear-gradient(#999, #999) 12px 0 / 1px 100% no-repeat; }
.tree2 li { height: 16px; line-height: 16px; white-space: nowrap; display: flex; align-items: center; }
.tree2 li::before { content: ""; flex: none; width: 6px; height: 6px; margin-right: 8px; border: solid #999; border-width: 1px 1px 0 0; transform: rotate(45deg); }
.tree2 .open::before { border-color: #333; transform: rotate(135deg); }
.tree2 .l0 { padding-left: 0; margin-left: -4px; }
.tree2 .l1 { padding-left: 15px; }
.tree2 .l2 { padding-left: 34px; background: linear-gradient(#999, #999) 19px 0 / 1px 100% no-repeat; }
.tree2 .l3 { padding-left: 54px; background: linear-gradient(#999, #999) 19px 0 / 1px 100% no-repeat; }
.tree2 .l3::before { width: 9px; height: 8px; margin: 0 4px 8px 0; border: dotted #888; border-width: 0 0 1px 1px; transform: none; }
.tree2 .cur span { background: #cce8ff; padding: 0 4px; margin-left: -4px; height: 16px; }
.gap { height: 145px; flex: none; }
.fillv { flex: 1; }
.near { margin-left: 48px; }
.radios { height: 40px; flex: none; display: flex; align-items: center; gap: 21px; padding-left: 10px; }
.radios label { gap: 8px; }
.radios input { width: 11px; height: 11px; border-color: #999; }
.radios input:checked { background: radial-gradient(circle, #000 0 2px, #fff 3px); }
.dright { flex: 1; margin-bottom: 1px; border: 1px solid #a0a0a8; background: #fff; display: flex; justify-content: space-between; padding: 1px 2px 0 1px; overflow: hidden; }
.quota { width: 554px; }
.quota tbody tr { height: 19px; }
.quota tbody .h29 { height: 29px; }
.quota td { font-family: "DejaVu Sans Mono", monospace; font-size: 10px; }
.quota td:nth-child(3) { font: 12px/12px "Liberation Mono", "Noto Sans CJK SC", monospace; padding: 2px 0 0 1px; }
.quota td:nth-child(n+5) { text-align: right; }
.marks { position: absolute; left: 0; top: 0; width: 853px; height: 514px; pointer-events: none; }
```
